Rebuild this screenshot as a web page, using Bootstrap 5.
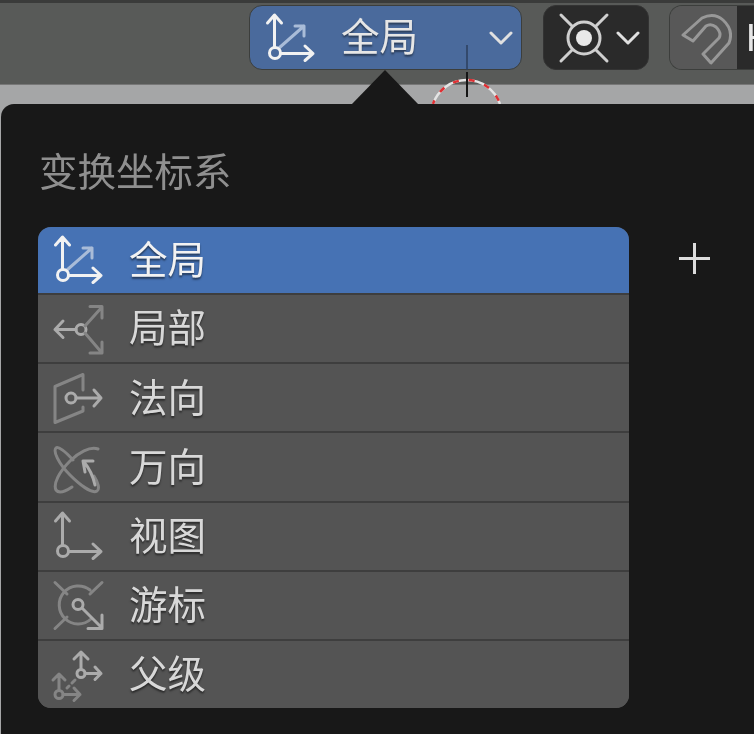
<!DOCTYPE html>
<html lang="zh">
<head>
  <meta charset="UTF-8">
  <title>变换坐标系</title>
  <link href="https://cdn.jsdelivr.net/npm/bootstrap@5.3.0/dist/css/bootstrap.min.css" rel="stylesheet">
  <style>
    html, body { height: 100%; }
    body { background: #a5a6a7; overflow: hidden; font-family: "Noto Sans CJK SC", "Liberation Sans", sans-serif; }
    .app-wrap { position: relative; width: 754px; height: 734px; overflow: hidden; filter: blur(.7px); }
    .top-bar { height: 85px; background: #585a58; border-top: 3px solid #3a3b3a; border-bottom: 1px solid #777; padding: 2px 0 0 249px; gap: 21px; }
    .hdr-btn { flex: none; height: 65px; border-radius: 13px; border: 1px solid #3c3e3c; padding: 0; color: #e6e6e6; font-size: 38.500px; line-height: 1; text-shadow: 0 2px 2px rgba(0,0,0,.45); }
    .hdr-btn:hover, .hdr-btn:active { color: #e6e6e6; }
    .btn-space { width: 273px; background: #4a6a9c; padding-left: 12px; }
    .btn-space:hover { background: #4a6a9c; }
    .btn-space .lbl { margin: 0 0 6px 23px; }
    .btn-pivot { width: 106px; background: #2a2a2a; border-color: #333; padding-left: 12px; }
    .btn-pivot:hover { background: #2a2a2a; }
    .btn-pivot .ic { stroke: #cfcfcf; }
    .snap-group { flex: none; width: 85px; height: 65px; margin-left: -1px; border-radius: 13px 0 0 13px; overflow: hidden; border: 1px solid #3c3e3c; border-right: 0; }
    .snap-btn { width: 67px; background: #585858; }
    .snap-btn .ic { stroke: #989898; }
    .snap-txt { background: #2a2a2a; color: #e6e6e6; font: 38px/65px "Liberation Sans", sans-serif; padding-left: 9px; }
    .mid-strip { height: 19px; background: #a5a6a7; }
    .popup { margin-left: 1px; height: 630px; background: #181818; border-radius: 13px 0 0 0; padding: 45px 0 0 37px; }
    .popup-title { color: #8f8f8f; font-size: 38.500px; line-height: 40px; margin: 0 0 38px 1px; }
    .space-list { width: 591px; border-radius: 13px; background: #545454; --bs-list-group-bg: #545454; --bs-list-group-border-width: 0; }
    .space-row { height: 69.2px; padding: 0 0 0 12px; background: #545454; color: #d8d8d8; border-top: 2px solid #3e3e3e !important; font-size: 38.500px; line-height: 1; gap: 23px; text-shadow: 0 2px 2px rgba(0,0,0,.5); }
    .space-row span { margin-bottom: 6px; }
    .space-row.active { height: 66px; background: #4672b4; color: #f2f2f2; border-top: 0 !important; }
    .space-row svg { flex: none; }
    .add-btn { margin: 15px 0 0 49px; width: 33px; height: 33px; padding: 0; border: 0; background: none; }
    .ic { fill: none; stroke: #ababab; stroke-width: 3; stroke-linecap: round; stroke-linejoin: round; }
    .active .ic, .btn-space .ic { stroke: #f2f2f2; }
    .ic .dim { stroke: #858585; }
    .active .ic .dim, .btn-space .ic .dim { stroke: #a9bcd8; }
    .chev { fill: none; stroke: #e0e0e0; stroke-width: 3; stroke-linecap: round; stroke-linejoin: round; }
    .pop-arrow { position: absolute; left: 351px; top: 70px; width: 68px; height: 35px; background: #181818; clip-path: polygon(50% 0, 100% 100%, 0 100%); }
    .gizmo { position: absolute; left: 425px; top: 40px; }
  </style>
</head>
<body>
  <div class="app-wrap">
    <!-- barra superior -->
    <div class="top-bar d-flex align-items-start">
      <button class="btn hdr-btn btn-space d-flex align-items-center" type="button">
        <svg width="56" height="56" viewBox="0 0 56 56"><g class="ic">
          <path class="dim" d="M17 38 42 16M33 16h9v10"/>
          <circle cx="13" cy="43" r="5.500"/>
          <path d="M12.500 37V6M5.500 13l7-8 7 8M19 43.500h32M43 36l8 7.500-8 7"/>
        </g></svg>
        <span class="lbl">全局</span>
        <svg class="ms-auto me-2" width="24" height="14" viewBox="0 0 24 14"><path class="chev" d="M2 2l10 10L22 2"/></svg>
      </button>
      <button class="btn hdr-btn btn-pivot d-flex align-items-center" type="button">
        <svg width="56" height="56" viewBox="0 0 56 56">
          <g class="ic">
            <circle cx="28" cy="28" r="16"/>
            <path d="M5 5 16 16M51 5 40 16M5 51 16 40M51 51 40 40"/>
          </g>
          <circle cx="28" cy="28" r="8" fill="#e8e8e8"/>
        </svg>
        <svg class="ms-1" width="24" height="14" viewBox="0 0 24 14"><path class="chev" d="M2 2l10 10L22 2"/></svg>
      </button>
      <div class="snap-group d-flex">
        <div class="snap-btn d-flex align-items-center justify-content-center flex-shrink-0">
          <svg width="56" height="56" viewBox="0 0 56 56">
            <path class="ic" d="M7 25 26 8Q38 2 47 10 58 20 53 33L35 53 27 44 43 28Q46 23 40 17 35 13 30 16L17 31Z"/>
          </svg>
        </div>
        <div class="snap-txt flex-grow-1">H</div>
      </div>
    </div>
    <div class="mid-strip"></div>

    <!-- popup -->
    <div class="popup">
      <h6 class="popup-title fw-normal">变换坐标系</h6>
      <div class="d-flex align-items-start">
        <div class="list-group space-list">
          <div class="list-group-item space-row active d-flex align-items-center">
            <svg width="56" height="56" viewBox="0 0 56 56"><g class="ic">
              <path class="dim" d="M17 38 42 16M33 16h9v10"/>
              <circle cx="13" cy="43" r="5.500"/>
              <path d="M12.500 37V6M5.500 13l7-8 7 8M19 43.500h32M43 36l8 7.500-8 7"/>
            </g></svg>
            <span>全局</span>
          </div>
          <div class="list-group-item space-row d-flex align-items-center">
            <svg width="56" height="56" viewBox="0 0 56 56"><g class="ic">
              <circle cx="31" cy="28.500" r="5"/>
              <path d="M26 28.500H5M13 20l-8 8.500 8 8"/>
              <path class="dim" d="M35 25 52 6M40 5.500h12V17M35 32l17 20M40 52h12V41"/>
            </g></svg>
            <span>局部</span>
          </div>
          <div class="list-group-item space-row d-flex align-items-center">
            <svg width="56" height="56" viewBox="0 0 56 56"><g class="ic">
              <path class="dim" d="M33 20V4.500L5 16.500v36L33 41v-4"/>
              <circle cx="21" cy="28" r="5"/>
              <path d="M26 28h25M44 20l7 8-7 8"/>
            </g></svg>
            <span>法向</span>
          </div>
          <div class="list-group-item space-row d-flex align-items-center">
            <svg width="56" height="56" viewBox="0 0 56 56"><g class="ic">
              <path class="dim" d="M23 21C15 12 8 7 6 9 3 12 8 24 20 36 30 46 42 55 47 52 50 50 48 43 44 37M48 10C40 7 28 14 20 22 9 33 3 45 6 51 9 55 16 52 22 48"/>
              <path d="M33 22h10M33 22l2 11M34 23c5 6 9 14 11 23"/>
            </g></svg>
            <span>万向</span>
          </div>
          <div class="list-group-item space-row d-flex align-items-center">
            <svg width="56" height="56" viewBox="0 0 56 56"><g class="ic">
              <circle cx="13" cy="43" r="5.500"/>
              <path d="M12.500 37V6M5.500 13l7-8 7 8M19 43.500h32M43 36l8 7.500-8 7"/>
            </g></svg>
            <span>视图</span>
          </div>
          <div class="list-group-item space-row d-flex align-items-center">
            <svg width="56" height="56" viewBox="0 0 56 56"><g class="ic">
              <path class="dim" d="M5 5.500 17 17M52 5.500 40 17M5 51.500 17 40M40 13A19 19 0 1 0 41 42"/>
              <circle cx="28" cy="27.500" r="5"/>
              <path d="M32 31l20 20M38 51.500h14V38"/>
            </g></svg>
            <span>游标</span>
          </div>
          <div class="list-group-item space-row d-flex align-items-center">
            <svg width="56" height="56" viewBox="0 0 56 56"><g class="ic">
              <circle cx="31" cy="26.500" r="4"/>
              <path d="M31 22V5M24 12l7-7 7 7M35 26.500h16M45 20l6 6.500-6 6"/>
              <g class="dim">
                <circle cx="9" cy="47.500" r="4"/>
                <path d="M9 43V27M3 33l6-6 6 6M13 47.500h17M24 41l6 6.500-6 6M17 41l2-2M22 36l3-3"/>
              </g>
            </g></svg>
            <span>父级</span>
          </div>
        </div>
        <button class="add-btn" type="button" aria-label="添加">
          <svg width="33" height="33" viewBox="0 0 33 33"><path d="M16.500 1v31M1 16.500h31" stroke="#dcdcdc" stroke-width="3" fill="none"/></svg>
        </button>
      </div>
    </div>

    <!-- sobre el contenido: flecha del popup y gizmo del viewport -->
    <div class="pop-arrow"></div>
    <svg class="gizmo" width="84" height="64" viewBox="425 40 84 64">
      <path d="M433 104A35.400 35.400 0 0 1 500 104" fill="none" stroke="#e4e4e4" stroke-width="2.500"/>
      <path d="M433 104A35.400 35.400 0 0 1 500 104" fill="none" stroke="#e03034" stroke-width="2.500" stroke-dasharray="6 10" stroke-dashoffset="2"/>
      <path d="M467 45V70" stroke="#2c3f5c" stroke-width="1.500"/>
      <path d="M467 72V97" stroke="#151515" stroke-width="2"/>
    </svg>
  </div>

  <script src="https://cdn.jsdelivr.net/npm/bootstrap@5.3.0/dist/js/bootstrap.bundle.min.js"></script>
</body>
</html>
